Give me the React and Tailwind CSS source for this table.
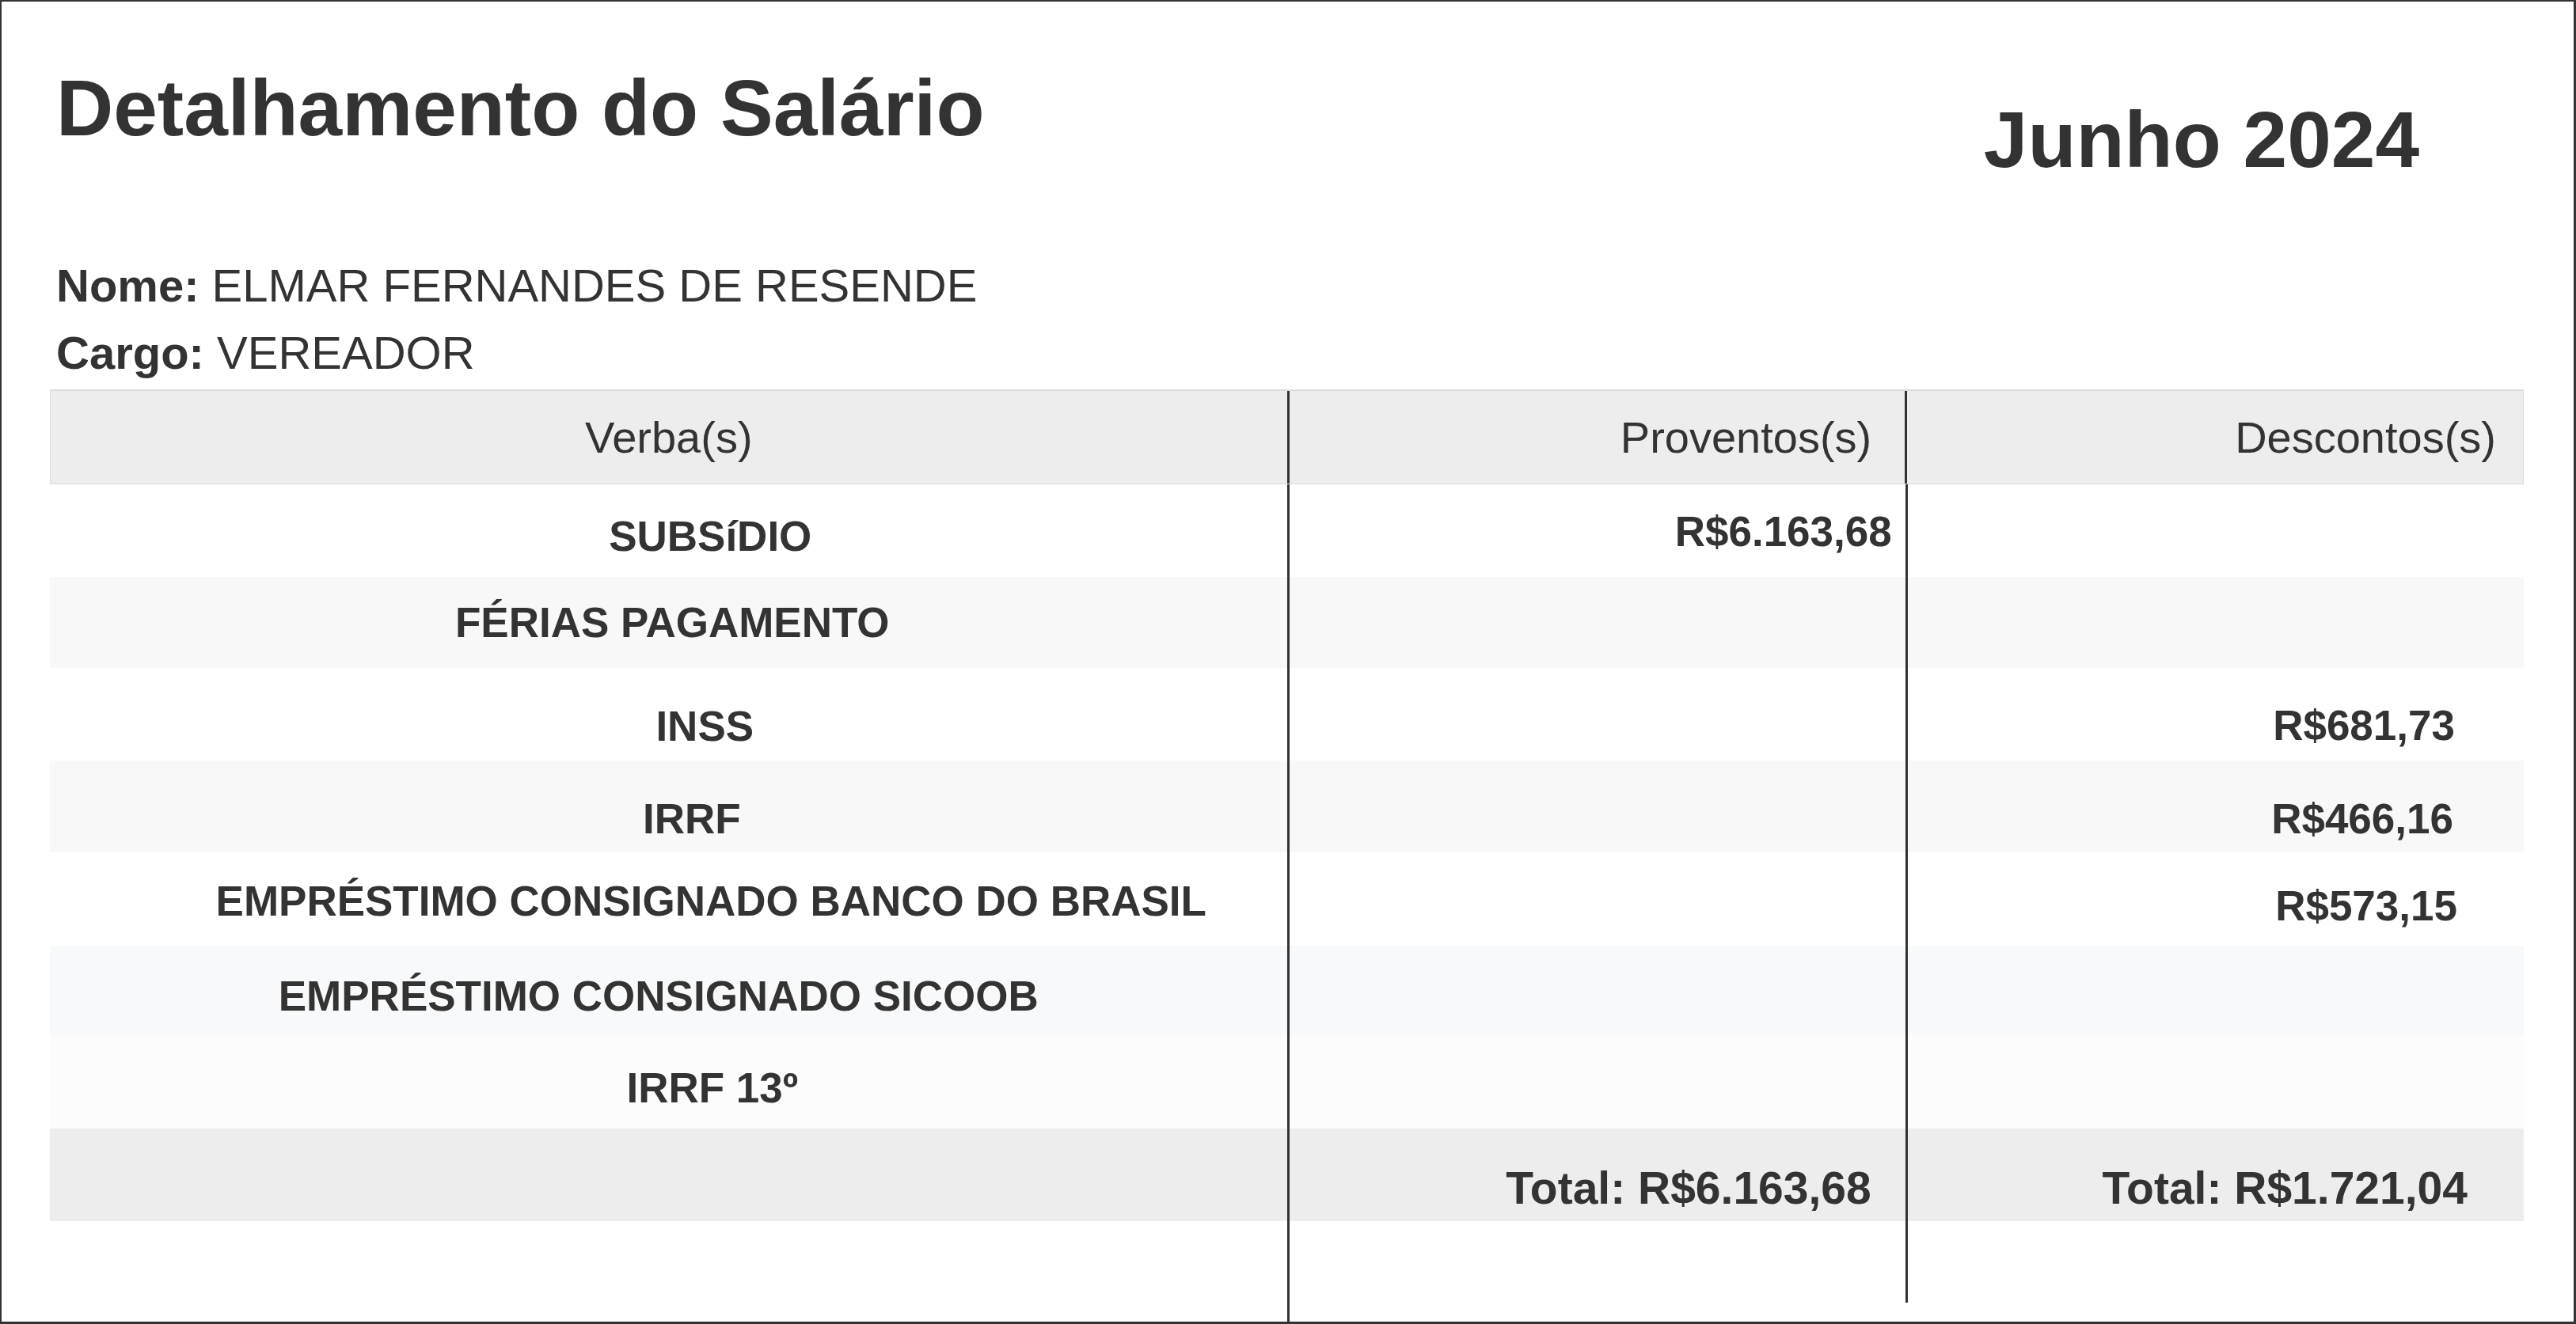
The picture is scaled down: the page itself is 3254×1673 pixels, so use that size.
import React from 'react';

const rows = [
    { label: 'SUBSíDIO', pv: 'R$6.163,68', ds: '', h: 'h-[117px]', bg: 'bg-white', lp: 'pt-[39px]', vp: 'pt-[33px]', shift: 'pl-[106px]', pvr: 'pr-[17px]', dsr: 'pr-[87px]' },
    { label: 'FÉRIAS PAGAMENTO', pv: '', ds: '', h: 'h-[115px]', bg: 'bg-[#f8f8f8]', lp: 'pt-[31px]', vp: 'pt-[31px]', shift: 'pl-[10px]', pvr: 'pr-[17px]', dsr: 'pr-[87px]' },
    { label: 'INSS', pv: '', ds: 'R$681,73', h: 'h-[117px]', bg: 'bg-white', lp: 'pt-[47px]', vp: 'pt-[46px]', shift: 'pl-[92px]', pvr: 'pr-[17px]', dsr: 'pr-[87px]' },
    { label: 'IRRF', pv: '', ds: 'R$466,16', h: 'h-[116px]', bg: 'bg-[#f8f8f8]', lp: 'pt-[47px]', vp: 'pt-[47px]', shift: 'pl-[59px]', pvr: 'pr-[17px]', dsr: 'pr-[89px]' },
    { label: 'EMPRÉSTIMO CONSIGNADO BANCO DO BRASIL', pv: '', ds: 'R$573,15', h: 'h-[118px]', bg: 'bg-white', lp: 'pt-[35px]', vp: 'pt-[41px]', shift: 'pl-[108px]', pvr: 'pr-[17px]', dsr: 'pr-[84px]' },
    { label: 'EMPRÉSTIMO CONSIGNADO SICOOB', pv: '', ds: '', h: 'h-[114px]', bg: 'bg-[#f8f9fa]', lp: 'pt-[37px]', vp: 'pt-[37px]', shift: 'pr-[25px]', pvr: 'pr-[17px]', dsr: 'pr-[87px]' },
    { label: 'IRRF 13º', pv: '', ds: '', h: 'h-[117px]', bg: 'bg-[#fcfcfc]', lp: 'pt-[39px]', vp: 'pt-[39px]', shift: 'pl-[111px]', pvr: 'pr-[17px]', dsr: 'pr-[87px]' },
];

export default function App() {
    return (
        <div className="w-full h-[1673px] bg-white border-t-2 border-l-2 border-r-[3px] border-b-[3px] border-[#333] flex flex-col pl-[61px] pr-[63px] pt-[84px] text-[#333] font-['Liberation_Sans',Arial,sans-serif]">
            <div className="flex justify-between items-start">
                <h1 className="pl-[8px] text-[100px] font-bold leading-none">Detalhamento do Salário</h1>
                <div className="mt-[40px] pr-[132px] text-[100px] font-bold leading-none">Junho 2024</div>
            </div>

            <div className="mt-[92px] pl-[8px] text-[58px] leading-[85px]">
                <p><span className="font-bold">Nome:</span> ELMAR FERNANDES DE RESENDE</p>
                <p><span className="font-bold">Cargo:</span> VEREADOR</p>
            </div>

            <div className="mt-[4px] flex-1 flex flex-col">
                <div className="grid grid-cols-[2fr_1fr_1fr] h-[120px] bg-[#ededed] border-t-2 border-x border-b border-[#dcdcdc] text-[56px] leading-none">
                    <div className="flex items-center justify-center">Verba(s)</div>
                    <div className="flex items-center justify-end pr-[42px] border-l-[3px] border-[#333]">Proventos(s)</div>
                    <div className="flex items-center justify-end pr-[34px] border-l-[3px] border-[#333]">Descontos(s)</div>
                </div>

                {rows.map((r) => (
                    <div key={r.label} className={`grid grid-cols-[2fr_1fr_1fr] text-[53px] font-bold leading-none ${r.h} ${r.bg}`}>
                        <div className={`flex justify-center ${r.lp}`}>
                            <span className={`whitespace-nowrap ${r.shift}`}>{r.label}</span>
                        </div>
                        <div className={`text-right border-l-[3px] border-[#333] ${r.vp} ${r.pvr}`}>{r.pv}</div>
                        <div className={`text-right border-l-[3px] border-[#333] ${r.vp} ${r.dsr}`}>{r.ds}</div>
                    </div>
                ))}

                <div className="grid grid-cols-[2fr_1fr_1fr] h-[117px] bg-[#ededed] text-[57px] font-bold leading-none">
                    <div />
                    <div className="text-right pt-[47px] pr-[43px] border-l-[3px] border-[#333]">Total: R$6.163,68</div>
                    <div className="text-right pt-[47px] pr-[71px] border-l-[3px] border-[#333]">Total: R$1.721,04</div>
                </div>

                <div className="flex-1 grid grid-cols-[2fr_1fr_1fr]">
                    <div />
                    <div className="border-l-[3px] border-[#333]" />
                    <div className="self-start h-[103px] border-l-[3px] border-[#333]" />
                </div>
            </div>
        </div>
    );
}
